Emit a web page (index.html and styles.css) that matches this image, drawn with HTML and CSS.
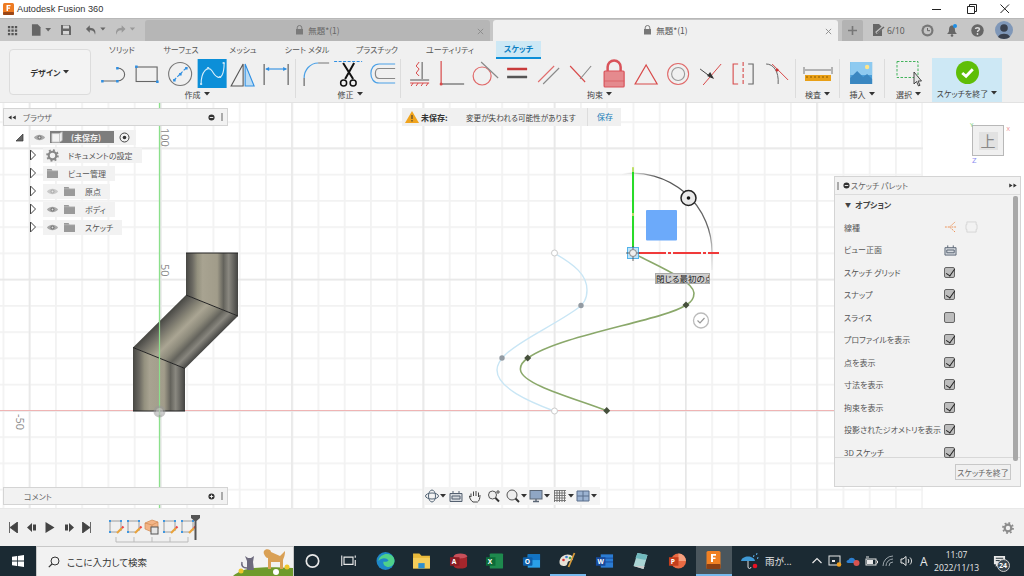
FILE: index.html
```html
<!DOCTYPE html>
<html lang="ja">
<head>
<meta charset="utf-8">
<title>Autodesk Fusion 360</title>
<link rel="stylesheet" href="styles.css">
</head>
<body>
<svg class="defs" width="0" height="0">
  <symbol id="eye" viewBox="0 0 14 10"><path d="M1 5C4 1 10 1 13 5 10 9 4 9 1 5Z" fill="#a9a9a9"/><circle cx="7" cy="5" r="2.2" fill="#777"/><circle cx="7" cy="5" r="1" fill="#ddd"/></symbol>
  <symbol id="folder" viewBox="0 0 14 12"><path d="M1 1H6L7 3H13V11H1Z" fill="#9a9a9a"/><path d="M1 3H13" stroke="#c4c4c4" stroke-width=".7"/></symbol>
  <symbol id="expand" viewBox="0 0 8 12"><path d="M1.500 1 6.500 6 1.500 11Z" fill="#fff" stroke="#444" stroke-width="1"/></symbol>
  <symbol id="sk" viewBox="0 0 18 18"><path d="M3 3H14V13" fill="none" stroke="#888" stroke-width=".8"/><path d="M3 3V14H10" fill="none" stroke="#888" stroke-width=".8"/><g fill="#3f97e0"><rect x="2" y="2" width="2" height="2"/><rect x="13" y="2" width="2" height="2"/><rect x="2" y="13" width="2" height="2"/></g><path d="M10 15 15 10" stroke="#e9a23b" stroke-width="2.200"/><path d="M15 10 16.500 8.500" stroke="#e44" stroke-width="2.200"/></symbol>
  <symbol id="caret" viewBox="0 0 6 4"><path d="M0 0H6L3 3.500Z" fill="currentColor"/></symbol>
  <symbol id="dbl" viewBox="0 0 9 6"><path d="M0 3 4 .5V5.500ZM5 3 9 .5V5.500Z" fill="#333"/></symbol>
  <symbol id="dblr" viewBox="0 0 9 6"><path d="M4 3 0 .5V5.500ZM9 3 5 .5V5.500Z" fill="#333"/></symbol>
  <linearGradient id="pipeV" x1="0" x2="1" y1="0" y2="0">
    <stop offset="0" stop-color="#474743"/><stop offset=".12" stop-color="#6a6861"/><stop offset=".22" stop-color="#94917f"/><stop offset=".32" stop-color="#a8a391"/><stop offset=".6" stop-color="#a19c8a"/><stop offset=".72" stop-color="#64635c"/><stop offset=".82" stop-color="#8a8880"/><stop offset="1" stop-color="#434341"/>
  </linearGradient>
  <linearGradient id="pipeD" gradientUnits="userSpaceOnUse" x1="186" y1="295" x2="222.500" y2="331.500">
    <stop offset="0" stop-color="#474743"/><stop offset=".14" stop-color="#6a6861"/><stop offset=".3" stop-color="#8f8c7c"/><stop offset=".42" stop-color="#aaa593"/><stop offset=".58" stop-color="#8e8b7c"/><stop offset=".72" stop-color="#64635c"/><stop offset=".84" stop-color="#88867e"/><stop offset="1" stop-color="#434341"/>
  </linearGradient>
  <linearGradient id="arcFade" gradientUnits="userSpaceOnUse" x1="622" y1="174" x2="712" y2="270">
    <stop offset="0" stop-color="#777" stop-opacity="0"/><stop offset=".2" stop-color="#555"/><stop offset=".75" stop-color="#666"/><stop offset="1" stop-color="#bbb" stop-opacity=".2"/>
  </linearGradient>
  <pattern id="gridMinor" width="26.250" height="26.250" patternUnits="userSpaceOnUse" x="2.500" y="16.250"><path d="M0 0V26.250M0 0H26.250" stroke="#f2f2f2" stroke-width="3.500" fill="none"/></pattern>
  <pattern id="gridMajor" width="131.250" height="131.250" patternUnits="userSpaceOnUse" x="28.750" y="16.250"><path d="M0 0V131.250M0 0H131.250" stroke="#e7e7e7" stroke-width="3" fill="none"/></pattern>
</svg>

<header class="titlebar">
  <svg class="app-logo" viewBox="0 0 11 12"><rect width="11" height="12" rx="1.500" fill="#ee7b22"/><rect y="9" width="11" height="3" rx="1" fill="#9a4515"/><path d="M3.500 2H7.500V3.200H5V4.500H7V5.700H5V8H3.500Z" fill="#fff"/></svg>
  <span class="app-title">Autodesk Fusion 360</span>
  <div class="win-buttons">
    <svg viewBox="0 0 34 16"><path d="M12 8.500H21" stroke="#222"/></svg>
    <svg viewBox="0 0 34 16"><path d="M13.500 5.500H20.500V12.500H13.500ZM15.500 5.500V3.500H22.500V10.500H20.500" fill="none" stroke="#222"/></svg>
    <svg viewBox="0 0 34 16"><path d="M12.500 3.500 21 12M21 3.500 12.500 12" stroke="#222"/></svg>
  </div>
</header>

<nav class="tabbar">
  <div class="qat">
    <svg class="q-grid" viewBox="0 0 12 12"><path d="M1 1h2.500v2.500H1zM4.800 1h2.500v2.500H4.800zM8.600 1h2.500v2.500H8.600zM1 4.800h2.500v2.500H1zM4.800 4.800h2.500v2.500H4.800zM8.600 4.800h2.500v2.500H8.600zM1 8.600h2.500v2.500H1zM4.800 8.600h2.500v2.500H4.800zM8.600 8.600h2.500v2.500H8.600z" fill="#555"/></svg>
    <svg class="q-doc" viewBox="0 0 22 12"><path d="M1 0H7L10 3V12H1Z" fill="#666"/><path d="M15 4H21L18 7.500Z" fill="#666"/></svg>
    <svg class="q-save" viewBox="0 0 12 12"><path d="M1 1H9.500L11 2.500V11H1Z" fill="#666"/><rect x="3" y="1.500" width="6" height="3" fill="#d5d5d5"/><rect x="3" y="7" width="6" height="3.500" fill="#d5d5d5"/></svg>
    <svg class="q-undo" viewBox="0 0 22 12"><path d="M5 1 1 5 5 9V6.200C8 6 10 7.500 10.500 11 12 6.500 9.500 3.600 5 3.600Z" fill="#666"/><path d="M16 3.500H21.500L18.700 6.500Z" fill="#666"/></svg>
    <svg class="q-redo" viewBox="0 0 22 12"><path d="M7 1 11 5 7 9V6.200C4 6 2 7.500 1.500 11 0 6.500 2.500 3.600 7 3.600Z" fill="#999"/><path d="M15.500 3.500H21L18.200 6.500Z" fill="#999"/></svg>
  </div>
  <div class="doc-tab inactive">
    <svg class="lock" viewBox="0 0 9 10"><path d="M2.200 4V2.800a2.300 2.300 0 0 1 4.600 0V4" fill="none" stroke="#7a7a7a"/><rect x="1" y="4" width="7" height="5.500" fill="#7a7a7a"/></svg>
    <span>無題*(1)</span>
    <svg class="tab-x" viewBox="0 0 8 8"><path d="M1 1 7 7M7 1 1 7" stroke="#888"/></svg>
  </div>
  <div class="doc-tab active">
    <svg class="lock" viewBox="0 0 9 10"><path d="M2.200 4V2.800a2.300 2.300 0 0 1 4.600 0V4" fill="none" stroke="#777"/><rect x="1" y="4" width="7" height="5.500" fill="#777"/></svg>
    <span>無題*(1)</span>
    <svg class="tab-x" viewBox="0 0 8 8"><path d="M1 1 7 7M7 1 1 7" stroke="#888"/></svg>
  </div>
  <div class="plus-tab"><svg viewBox="0 0 10 10"><path d="M5 0V10M0 5H10" stroke="#777" stroke-width="1.800"/></svg></div>
  <div class="account">
    <svg class="job" viewBox="0 0 13 12"><path d="M1 0H7L10 3V12H1Z" fill="#666"/><path d="M4 9 11 3" stroke="#c4c4c4" stroke-width="2.500"/><path d="M5 9 12 3" stroke="#666" stroke-width="1.500"/></svg>
    <span class="job-count">6/10</span>
    <svg class="acc-clock" viewBox="0 0 13 13"><circle cx="6.500" cy="6.500" r="6" fill="#777"/><circle cx="6.500" cy="6.500" r="3.800" fill="#c5c5c5"/><path d="M6.500 4V6.700H9" stroke="#666" fill="none"/></svg>
    <svg class="acc-bell" viewBox="0 0 12 13"><path d="M6 1.500C3.500 1.500 3 4 3 6.500 3 8.500 1.500 9.500 1 10H11C10.500 9.500 9 8.500 9 6.500 9 4 8.500 1.500 6 1.500Z" fill="#666"/><circle cx="6" cy="11.500" r="1.300" fill="#666"/><circle cx="9" cy="2" r="2" fill="#1f8fe6"/></svg>
    <svg class="acc-help" viewBox="0 0 13 13"><circle cx="6.500" cy="6.500" r="6.200" fill="#666"/><path d="M4.500 5C4.500 3.300 8.500 3.300 8.500 5 8.500 6.500 6.500 6.300 6.500 8" fill="none" stroke="#ddd" stroke-width="1.400"/><circle cx="6.500" cy="10" r=".9" fill="#ddd"/></svg>
    <svg class="acc-user" viewBox="0 0 18 18"><circle cx="9" cy="9" r="9" fill="#7f97b8"/><circle cx="9" cy="7" r="3.800" fill="#39404d"/><path d="M3 16C4 11.500 14 11.500 15 16 12 18.500 6 18.500 3 16Z" fill="#39404d"/></svg>
  </div>
</nav>

<section class="ribbon">
  <div class="ribbon-tabs">
    <span class="rt" style="width:50px">ソリッド</span>
    <span class="rt" style="width:68px">サーフェス</span>
    <span class="rt" style="width:56px">メッシュ</span>
    <span class="rt" style="width:72px">シート メタル</span>
    <span class="rt" style="width:68px">プラスチック</span>
    <span class="rt" style="width:78px">ユーティリティ</span>
    <span class="rt current">スケッチ</span>
  </div>
  <div class="ribbon-body">
    <button class="workspace">デザイン <svg class="caret"><use href="#caret"/></svg></button>
    <div class="group g-create">
      <div class="icons">
        <svg viewBox="0 0 32 30"><path d="M3 22H18C28 22 28 9 18 9" fill="none" stroke="#666" stroke-width="1.100"/><g fill="#2f8fe2"><rect x="2" y="21" width="2.500" height="2.500"/><rect x="17" y="21" width="2.500" height="2.500"/><rect x="17" y="8" width="2.500" height="2.500"/></g></svg>
        <svg viewBox="0 0 32 30"><rect x="5" y="8" width="21" height="14.500" fill="none" stroke="#666" stroke-width="1.100"/><g fill="#2f8fe2"><rect x="4" y="6.500" width="2.500" height="2.500"/><rect x="25" y="21.500" width="2.500" height="2.500"/></g></svg>
        <svg viewBox="0 0 32 30"><circle cx="16" cy="15" r="11.500" fill="none" stroke="#777" stroke-width="1.100"/><path d="M10 21 22 9" stroke="#2f8fe2" stroke-dasharray="3 1.500" stroke-width="1.100"/><g fill="#2f8fe2"><rect x="9" y="20" width="2.500" height="2.500"/><rect x="21" y="8" width="2.500" height="2.500"/><rect x="15" y="14" width="2.500" height="2.500"/></g></svg>
        <svg class="on" viewBox="0 0 32 30"><rect x="1.500" y="0" width="29" height="29" fill="#0c8fd8"/><path d="M5 25C5 12 12 6 16 12 20 19 24 20 26 16 27 14 28 9 28 4" fill="none" stroke="#d8eefa" stroke-width="1.100"/><g fill="#bfe3f7"><rect x="4" y="24" width="2" height="2"/><rect x="11" y="8" width="2" height="2"/><rect x="23" y="17" width="2" height="2"/><rect x="26.500" y="3" width="2" height="2"/></g></svg>
        <svg viewBox="0 0 32 30"><path d="M15 5 3 27H15Z" fill="none" stroke="#555" stroke-width="1.100"/><path d="M17 5V27H26Z" fill="#bcdcf4" stroke="#2f8fe2" stroke-width="1.100"/></svg>
        <svg viewBox="0 0 32 30"><path d="M4 5V26M28 5V26" stroke="#555" stroke-width="1.100"/><path d="M6 10H26" stroke="#2f8fe2" stroke-width="1.100"/><path d="M5 10 9 8V12ZM27 10 23 8V12Z" fill="#2f8fe2"/></svg>
      </div>
      <div class="g-label">作成 <svg class="caret"><use href="#caret"/></svg></div>
    </div>
    <div class="group g-modify">
      <div class="icons">
        <svg viewBox="0 0 32 30"><path d="M4 27V19" stroke="#666" stroke-width="1.200"/><path d="M4 19C4 11 10 4 18 4" fill="none" stroke="#4aa0e6" stroke-width="1.200"/><path d="M18 4H29" stroke="#888" stroke-width="1.200"/></svg>
        <svg viewBox="0 0 32 30"><path d="M2 2.500H30" stroke="#2f8fe2" stroke-dasharray="3 1.500"/><path d="M11 4 21 20M22 4 13 20" stroke="#111" stroke-width="2"/><circle cx="11.500" cy="24" r="3" fill="none" stroke="#111" stroke-width="1.500"/><circle cx="21" cy="24" r="3" fill="none" stroke="#111" stroke-width="1.500"/></svg>
        <svg viewBox="0 0 32 30"><path d="M30 5H14C3 5 3 24 14 24H30" fill="none" stroke="#4aa0e6" stroke-width="1.200"/><path d="M30 9.500H14C9 9.500 9 19.500 14 19.500H30" fill="none" stroke="#888" stroke-width="1.200"/></svg>
      </div>
      <div class="g-label">修正 <svg class="caret"><use href="#caret"/></svg></div>
    </div>
    <div class="group g-constraint">
      <div class="icons">
        <svg viewBox="0 0 32 30"><path d="M15 3 12 7 15 10 12 14 15 17" fill="none" stroke="#d84a4a"/><path d="M18 3V20" stroke="#555"/><path d="M6 21H25" stroke="#555"/><path d="M6 24H25M9 24 7 27M14 24 12 27M19 24 17 27M24 24 22 27" stroke="#d84a4a"/></svg>
        <svg viewBox="0 0 32 30"><path d="M5 2V25" stroke="#d84a4a" stroke-width="1.200"/><path d="M5 25H28" stroke="#666" stroke-width="1.200"/><circle cx="5" cy="25" r="1.500" fill="#d84a4a"/></svg>
        <svg viewBox="0 0 32 30"><circle cx="13" cy="17" r="9" fill="none" stroke="#e06a6a" stroke-width="1.200"/><path d="M12 3 29 19" stroke="#888" stroke-width="1.100"/></svg>
        <svg viewBox="0 0 32 30"><path d="M6 10H26" stroke="#c83a3a" stroke-width="2.500"/><path d="M6 18H26" stroke="#555" stroke-width="2.500"/></svg>
        <svg viewBox="0 0 32 30"><path d="M5 23 21 7" stroke="#e06a6a" stroke-width="1.100"/><path d="M10 25 26 9" stroke="#888" stroke-width="1.100"/></svg>
        <svg viewBox="0 0 32 30"><path d="M5 7 20 23" stroke="#d84a4a" stroke-width="1.100"/><path d="M15 20 26 7" stroke="#888" stroke-width="1.100"/></svg>
        <svg viewBox="0 0 32 30"><path d="M9.500 12V8a6.500 6.500 0 0 1 13 0V12" fill="none" stroke="#d9535a" stroke-width="2.500"/><rect x="6" y="12" width="20" height="16" rx="1" fill="#e58a8e" stroke="#d9535a" stroke-width="1.200"/><path d="M6 22H26" stroke="#d9535a" stroke-width=".7"/></svg>
        <svg viewBox="0 0 32 30"><path d="M16 6 27 25H5Z" fill="none" stroke="#d84a4a" stroke-width="1.200"/></svg>
        <svg viewBox="0 0 32 30"><circle cx="16" cy="15" r="10.500" fill="none" stroke="#e06a6a" stroke-width="1.100"/><circle cx="16" cy="15" r="6.500" fill="none" stroke="#999" stroke-width="1.100"/></svg>
        <svg viewBox="0 0 32 30"><path d="M9 26 27 5" stroke="#d84a4a" stroke-width="1"/><path d="M6 10 18 19" stroke="#444" stroke-width="1"/><path d="M20 20 13 17 16 13Z" fill="#333"/></svg>
        <svg viewBox="0 0 32 30"><path d="M11 5H6V25H11" fill="none" stroke="#d84a4a" stroke-width="1.100"/><path d="M21 5H26V25H21" fill="none" stroke="#666" stroke-width="1.100"/><path d="M16 3V27" stroke="#d84a4a" stroke-dasharray="4 2" stroke-width="1.100"/></svg>
        <svg viewBox="0 0 32 30"><path d="M7 5C14 5 20 12 19 25" fill="none" stroke="#666" stroke-width="1"/><path d="M13 5 29 21" stroke="#d84a4a" stroke-width="1"/><circle cx="18" cy="11" r="1.500" fill="#c33"/></svg>
      </div>
      <div class="g-label">拘束 <svg class="caret"><use href="#caret"/></svg></div>
    </div>
    <div class="group g-inspect">
      <div class="icons">
        <svg class="wide" viewBox="0 0 36 30"><path d="M4 8V15M32 8V15M5 11H31" stroke="#666" stroke-width=".9"/><rect x="5" y="16" width="26" height="6" fill="#e9a017"/><path d="M7 17V19M11 17V19M15 17V19M19 17V19M23 17V19M27 17V19" stroke="#8a5a00"/></svg>
      </div>
      <div class="g-label">検査 <svg class="caret"><use href="#caret"/></svg></div>
    </div>
    <div class="group g-insert">
      <div class="icons">
        <svg viewBox="0 0 32 30"><rect x="4" y="3" width="22" height="22" fill="#4b9fd9"/><rect x="4" y="3" width="22" height="13" fill="#8ecaf0"/><path d="M4 19 11 12 17 18 21 15 26 20V25H4Z" fill="#3a87c1"/><circle cx="21" cy="8" r="2.200" fill="#ffe68a"/></svg>
      </div>
      <div class="g-label">挿入 <svg class="caret"><use href="#caret"/></svg></div>
    </div>
    <div class="group g-select">
      <div class="icons">
        <svg class="wide" viewBox="0 0 36 30"><rect x="6" y="2.500" width="21" height="16" fill="none" stroke="#43b35c" stroke-dasharray="2.500 1.500"/><path d="M23 13V25L25.500 22.500 27.500 27 29 26.300 27 22H30.500Z" fill="#e5e5e5" stroke="#333" stroke-width=".9"/></svg>
      </div>
      <div class="g-label">選択 <svg class="caret"><use href="#caret"/></svg></div>
    </div>
    <div class="group g-finish">
      <svg class="finish-icon" viewBox="0 0 24 24"><circle cx="12" cy="12" r="12" fill="#5fbe08"/><path d="M6.500 12.500 10.500 16 17.500 8.500" fill="none" stroke="#fff" stroke-width="3"/></svg>
      <div class="g-label">スケッチを終了 <svg class="caret"><use href="#caret"/></svg></div>
    </div>
  </div>
</section>

<main class="viewport">
  <svg class="scene" viewBox="0 103 1024 405" preserveAspectRatio="none">
    <rect x="0" y="103" width="923" height="405" fill="url(#gridMinor)"/>
    <rect x="0" y="103" width="923" height="405" fill="url(#gridMajor)"/>
    <path d="M0 410.500H834" stroke="#efb4b4" stroke-width="1.100"/>
    <path d="M159.500 103V508" stroke="#8be08b" stroke-width="1.300"/>
    <text class="axis-num" transform="translate(161 128) rotate(90)">100</text>
    <text class="axis-num" transform="translate(161 264) rotate(90)">50</text>
    <text class="axis-num" transform="translate(16 414) rotate(90)">-50</text>

    <polygon points="186,253 238,253 238,316 186,295" fill="url(#pipeV)"/>
    <polygon points="186,295 238,316 185,368.500 133,347.500" fill="url(#pipeD)"/>
    <polygon points="133,347.500 185,368.500 185,411 133,411" fill="url(#pipeV)"/>
    <path d="M186 253H238M186 295 238 316M133 347.500 185 368.500M133 411H185" stroke="#222" fill="none" stroke-width="1"/>
    <path d="M159.500 320V420" stroke="#8be08b" stroke-width="1.200"/>
    <circle cx="159.500" cy="411.500" r="6" fill="#999" fill-opacity=".55"/><circle cx="159.500" cy="411.500" r="3.500" fill="#ddd" fill-opacity=".4"/>

    <path d="M554 253C575 265 587 275 587 290 587 300 583 304 578 308 555 325 520 340 505 355 498 362 497 366 497 370 497 388 530 402 554 411" fill="none" stroke="#c9e6f5" stroke-width="1.400"/>
    <circle cx="554.500" cy="253" r="3" fill="#fff" stroke="#ccc"/>
    <circle cx="581" cy="305.500" r="2.700" fill="#939ba3"/>
    <circle cx="502" cy="358" r="2.700" fill="#939ba3"/>
    <circle cx="554.500" cy="411" r="3" fill="#fff" stroke="#ccc"/>

    <path d="M633 253C655 265 693 280 694 293 694 300 690 303 686 305 665 320 560 335 528 358 522 362 520 366 520.500 370 522 385 580 400 607 411" fill="none" stroke="#8aa86a" stroke-width="1.600"/>
    <g fill="#46503c"><path d="M686 301.500 689.500 305 686 308.500 682.500 305Z"/><path d="M527.700 354.500 531.200 358 527.700 361.500 524.200 358Z"/><path d="M606.700 407 610.200 410.700 606.700 414.300 603.200 410.700Z"/></g>

    <path d="M622 174A79 79 0 0 1 712 253V270" fill="none" stroke="url(#arcFade)" stroke-width="1.300"/>
    <path d="M633 168V253" stroke="#12d812" stroke-width="1.800"/>
    <path d="M633 167V172M633 213V216" stroke="#c8e070" stroke-width="1.800"/>
    <path d="M638 253H719" stroke="#f03a3a" stroke-width="1.800" stroke-dasharray="28 2 3 2"/>
    <rect x="646" y="210" width="31" height="30.500" rx="1" fill="#6caafa"/>
    <rect x="627.500" y="247.500" width="11" height="11" fill="#bfe4fa" stroke="#52b3ea"/>
    <path d="M626 253H640M633 246V261" stroke="#444" stroke-width=".8"/>
    <circle cx="633" cy="253" r="3.500" fill="#eee" stroke="#888"/>
    <circle cx="688.500" cy="198" r="7.500" fill="#e9e9e9" stroke="#222" stroke-width="1.500"/><circle cx="688.500" cy="198" r="1.800" fill="#111"/>
    <circle cx="701" cy="320.500" r="7.500" fill="#fff" stroke="#bbb" stroke-width="1.300"/><path d="M697.500 320.500 700 323 704.500 318" fill="none" stroke="#999" stroke-width="1.200"/>
  </svg>

  <div class="tooltip">閉じる最初の点</div>

  <div class="panel browser">
    <div class="panel-head">
      <svg class="dbl"><use href="#dbl"/></svg><span class="ph-title">ブラウザ</span>
      <svg class="minus" viewBox="0 0 8 8"><circle cx="4" cy="4" r="3.500" fill="#333"/><path d="M2 4H6" stroke="#fff"/></svg>
      <span class="grip"></span>
    </div>
  </div>
  <div class="tree">
    <div class="node root">
      <svg class="root-tri" viewBox="0 0 9 9"><path d="M8 1V8H1Z" fill="#666" stroke="#333" stroke-width=".7"/></svg>
      <div class="pill">
        <svg class="ico"><use href="#eye"/></svg>
        <span class="root-name"><svg class="cube" viewBox="0 0 14 14"><path d="M1 3H10L13 1V11L10 13H1Z" fill="#f2f2f2" stroke="#bbb"/><path d="M10 3V13" stroke="#bbb"/></svg><b>(未保存)</b></span>
        <svg class="radio" viewBox="0 0 11 11"><circle cx="5.500" cy="5.500" r="4.500" fill="none" stroke="#444"/><circle cx="5.500" cy="5.500" r="1.800" fill="#333"/></svg>
      </div>
    </div>
    <div class="node"><svg class="exp"><use href="#expand"/></svg><div class="pill">
      <svg class="ico gear" viewBox="0 0 12 12"><circle cx="6" cy="6" r="3.500" fill="none" stroke="#888" stroke-width="2"/><circle cx="6" cy="6" r="5" fill="none" stroke="#888" stroke-width="1.600" stroke-dasharray="1.800 2.100"/></svg>
      <span class="label l1">ドキュメントの設定</span></div></div>
    <div class="node"><svg class="exp"><use href="#expand"/></svg><div class="pill">
      <svg class="ico"><use href="#folder"/></svg><span class="label l1">ビュー管理</span></div></div>
    <div class="node"><svg class="exp"><use href="#expand"/></svg><div class="pill">
      <svg class="ico faded"><use href="#eye"/></svg><svg class="ico"><use href="#folder"/></svg><span class="label">原点</span></div></div>
    <div class="node"><svg class="exp"><use href="#expand"/></svg><div class="pill">
      <svg class="ico"><use href="#eye"/></svg><svg class="ico"><use href="#folder"/></svg><span class="label">ボディ</span></div></div>
    <div class="node"><svg class="exp"><use href="#expand"/></svg><div class="pill">
      <svg class="ico"><use href="#eye"/></svg><svg class="ico"><use href="#folder"/></svg><span class="label">スケッチ</span></div></div>
  </div>

  <div class="notice">
    <svg class="warn" viewBox="0 0 14 12"><path d="M7 0 14 12H0Z" fill="#f0a41e"/><path d="M7 4V8M7 9V10.500" stroke="#333"/></svg>
    <b>未保存:</b>
    <span class="notice-text">変更が失われる可能性があります</span>
    <span class="notice-save">保存</span>
  </div>

  <div class="viewcube">
    <span class="vc-y">Y</span><span class="vc-x">X</span><span class="vc-z">Z</span>
    <div class="vc-face"><span>上</span></div>
  </div>

  <div class="palette">
    <div class="pal-head">
      <span class="grip"></span>
      <svg class="minus" viewBox="0 0 8 8"><circle cx="4" cy="4" r="3.500" fill="#333"/><path d="M2 4H6" stroke="#fff"/></svg>
      <span class="ph-title">スケッチ パレット</span>
      <svg class="fwd"><use href="#dblr"/></svg>
    </div>
    <div class="pal-body">
      <div class="pal-scroll"></div>
      <div class="pal-section"><span class="tri">▼</span> オプション</div>
      <div class="pal-row"><span>線種</span>
        <svg class="pal-ic" viewBox="0 0 14 13"><path d="M1 6.500H6L12 1M6 6.500 12 12M8 6.500H13" stroke="#ea8c4e" stroke-dasharray="2 1" fill="none"/></svg>
        <svg class="pal-ic second" viewBox="0 0 14 13"><path d="M2 1H12V4H13V9H12V12H2V9H1V4H2Z" fill="none" stroke="#d5d5d5"/></svg>
      </div>
      <div class="pal-row"><span>ビュー正面</span>
        <svg class="pal-ic" viewBox="0 0 14 13"><path d="M1 4H13V12H1ZM4 4V1.500M10 4V1.500M3 6.500H11V9.500H3Z" fill="#d5d9de" stroke="#546070"/></svg>
      </div>
      <div class="pal-row"><span>スケッチ グリッド</span><i class="check on"></i></div>
      <div class="pal-row"><span>スナップ</span><i class="check on"></i></div>
      <div class="pal-row"><span>スライス</span><i class="check"></i></div>
      <div class="pal-row"><span>プロファイルを表示</span><i class="check on"></i></div>
      <div class="pal-row"><span>点を表示</span><i class="check on"></i></div>
      <div class="pal-row"><span>寸法を表示</span><i class="check on"></i></div>
      <div class="pal-row"><span>拘束を表示</span><i class="check on"></i></div>
      <div class="pal-row"><span>投影されたジオメトリを表示</span><i class="check on"></i></div>
      <div class="pal-row"><span>3D スケッチ</span><i class="check on"></i></div>
    </div>
    <div class="pal-foot"><button class="pal-finish">スケッチを終了</button></div>
  </div>

  <div class="panel comments">
    <div class="panel-head">
      <span class="ph-title c">コメント</span>
      <svg class="minus" viewBox="0 0 8 8"><circle cx="4" cy="4" r="3.500" fill="#333"/><path d="M2 4H6M4 2V6" stroke="#fff"/></svg>
      <span class="grip"></span>
    </div>
  </div>

  <div class="navbar">
    <svg class="nv" viewBox="0 0 14 14"><ellipse cx="7" cy="7" rx="3.500" ry="6" fill="none" stroke="#567" /><ellipse cx="7" cy="7" rx="6.500" ry="3" fill="none" stroke="#567"/></svg><svg class="nc"><use href="#caret"/></svg>
    <svg class="nv" viewBox="0 0 14 13"><path d="M1 4H13V12H1ZM4 4V1.500M10 4V1.500M3 6.500H11V9.500H3Z" fill="#d5d9de" stroke="#546070"/></svg>
    <svg class="nv" viewBox="0 0 14 14"><path d="M3 8V4.500M5.500 7V2.500M8 7V2M10.500 8V3.500M3 8 1.500 7C1 8 3 12 5 13H9.500C11 12 12 10 12 6" fill="none" stroke="#444" stroke-width="1"/></svg>
    <svg class="nv" viewBox="0 0 14 14"><circle cx="5.500" cy="6" r="4" fill="#eee" stroke="#555"/><path d="M8.500 9 12 12.500" stroke="#333" stroke-width="2"/><path d="M11 1V5M9 3H13" stroke="#555"/></svg>
    <svg class="nv" viewBox="0 0 14 14"><circle cx="6" cy="6" r="5" fill="#eee" stroke="#555"/><path d="M9.500 9.500 13 13" stroke="#333" stroke-width="2"/></svg><svg class="nc"><use href="#caret"/></svg>
    <svg class="nv" viewBox="0 0 14 14"><rect x="1" y="1.500" width="12" height="8.500" fill="#8fa6c4" stroke="#5b6675"/><path d="M4 12.500H10M7 10V12.500" stroke="#5b6675" stroke-width="1.400"/></svg><svg class="nc"><use href="#caret"/></svg>
    <svg class="nv" viewBox="0 0 14 14"><path d="M1.500 1V13M4 1V13M6.500 1V13M9 1V13M11.500 1V13M1 1.500H13M1 4H13M1 6.500H13M1 9H13M1 11.500H13" stroke="#707070" stroke-width=".9"/></svg><svg class="nc"><use href="#caret"/></svg>
    <svg class="nv" viewBox="0 0 14 14"><path d="M1 2H13V12H1Z" fill="#9cb3d2" stroke="#5b6f8c"/><path d="M7 2V12M1 7H13" stroke="#5b6f8c"/></svg><svg class="nc"><use href="#caret"/></svg>
  </div>
</main>

<footer class="timeline">
  <div class="tl-controls">
    <svg viewBox="0 0 10 11"><path d="M1.500 0V11M9.500 0V11L2 5.500Z" fill="#444" stroke="#444" stroke-width=".8"/></svg>
    <svg viewBox="0 0 10 11"><path d="M0 5.500 5 1V10ZM6 2.500H9V8.500H6Z" fill="#444"/></svg>
    <svg viewBox="0 0 10 11"><path d="M.5 0 9.500 5.500 .5 11Z" fill="#444"/></svg>
    <svg viewBox="0 0 10 11"><path d="M10 5.500 5 1V10ZM1 2.500H4V8.500H1Z" fill="#444"/></svg>
    <svg viewBox="0 0 10 11"><path d="M8.500 0V11M.5 0V11L8 5.500Z" fill="#444" stroke="#444" stroke-width=".8"/></svg>
  </div>
  <div class="tl-track">
    <svg class="tl-item"><use href="#sk"/></svg>
    <svg class="tl-item"><use href="#sk"/></svg>
    <svg class="tl-item" viewBox="0 0 18 18"><path d="M2 5 9 2 15 4V11L9 14 2 11Z" fill="#f2b487" stroke="#d08a50" stroke-width=".7"/><path d="M2 5 9 7 15 4M9 7V14" stroke="#d08a50" stroke-width=".7" fill="none"/><rect x="8" y="9" width="7" height="7" fill="#e5e5e5" stroke="#555"/></svg>
    <svg class="tl-item"><use href="#sk"/></svg>
    <svg class="tl-item"><use href="#sk"/></svg>
    <svg class="tl-bracket" viewBox="0 0 74 6"><path d="M1 0V5H73V0M19 0V5M37 0V5M55 0V5" fill="none" stroke="#bbb"/></svg>
    <svg class="tl-marker" viewBox="0 0 10 25"><path d="M0 0H9V3L5.500 6V25H3.500V6L0 3Z" fill="#555"/></svg>
  </div>
  <svg class="tl-gear" viewBox="0 0 12 12"><circle cx="6" cy="6" r="3.300" fill="none" stroke="#8c8c8c" stroke-width="2.200"/><circle cx="6" cy="6" r="5" fill="none" stroke="#8c8c8c" stroke-width="1.800" stroke-dasharray="1.800 2.100"/></svg>
</footer>

<footer class="taskbar">
  <div class="start"><svg viewBox="0 0 12 12"><path d="M0 1.700 5 1V5.600H0ZM5.800.9 12 0V5.600H5.800ZM0 6.400H5V11L0 10.300ZM5.800 6.400H12V12L5.800 11.100Z" fill="#fff"/></svg></div>
  <div class="search">
    <svg class="s-ic" viewBox="0 0 12 12"><circle cx="7" cy="5" r="4" fill="none" stroke="#333"/><path d="M4 8 .8 11.200" stroke="#333" stroke-width="1.200"/></svg>
    <span>ここに入力して検索</span>
    <svg class="s-art" viewBox="0 0 60 30"><path d="M0 30C10 21 30 20 60 22V30Z" fill="#6f9a2c"/><path d="M14 24V15L12 10 15 12H18L21 10 20 16 21 24Z" fill="#6d6a7d"/><path d="M14 22C10 22 8 20 9 16" fill="none" stroke="#6d6a7d" stroke-width="1.500"/><path d="M31 8C29 2 38 2 38 6L47 10 52 5C52 10 51 11 50 14V23H47V16H38V23H35V12C33 12 32 10 31 8Z" fill="#d9a055"/><circle cx="8" cy="25" r="2.500" fill="#eec72b"/><circle cx="43" cy="26" r="3" fill="#fff"/><circle cx="54" cy="21" r="2.500" fill="#eec72b"/></svg>
  </div>
  <div class="tb-apps">
    <div class="tb-app"><svg viewBox="0 0 16 16"><circle cx="8" cy="8" r="5.500" fill="none" stroke="#e8e8e8" stroke-width="1.500"/></svg></div>
    <div class="tb-app"><svg viewBox="0 0 16 16"><path d="M4 4.500H12V11H4ZM2 3V12.500M14 3V5M14 7V12.500" fill="none" stroke="#e8e8e8"/></svg></div>
    <div class="tb-app"><svg viewBox="0 0 18 18"><circle cx="9" cy="9" r="9" fill="#1e88c8"/><path d="M18 9C18 3 12 1 7.500 2.500 3.500 4 2 7 2 9 5 5.500 10 5.500 12 8.500 11 10 8 10 7 9.500 6 12.500 9 15 12 15 15 15 18 12 18 9Z" fill="#4fd08a"/></svg></div>
    <div class="tb-app"><svg viewBox="0 0 18 16"><path d="M1 1H7L9 3H17V15H1Z" fill="#e9b93a"/><rect x="1" y="5" width="16" height="10" fill="#f4cd5a"/><rect x="6" y="10" width="6" height="5" fill="#2d8fd0"/></svg></div>
    <div class="tb-app"><svg viewBox="0 0 20 18"><ellipse cx="12" cy="4" rx="7" ry="3" fill="#c8505a"/><path d="M5 4V14C5 18 19 18 19 14V4C19 7 5 7 5 4Z" fill="#a4262c"/><rect x="1" y="5" width="10" height="9" fill="#8a1c24"/><text class="tb-letter" x="3" y="12.500">A</text></svg></div>
    <div class="tb-app"><svg viewBox="0 0 20 18"><rect x="5" y="1" width="14" height="16" rx="1" fill="#1e8a4e"/><rect x="1" y="5" width="10" height="9" fill="#0d6b38"/><text class="tb-letter" x="3" y="12.500">X</text></svg></div>
    <div class="tb-app"><svg viewBox="0 0 20 18"><rect x="6" y="2" width="13" height="14" fill="#2aa0e8"/><path d="M6 2H19V8H6Z" fill="#1273c4"/><rect x="1" y="5" width="10" height="9" rx="1" fill="#0f5fa8"/><text class="tb-letter" x="3" y="12.500">O</text></svg></div>
    <div class="tb-app underlined"><svg viewBox="0 0 18 18"><path d="M1 11C1 5 8 2 12 4 16 6 15 10 11 10 8 10 10 15 6 15 3 15 1 14 1 11Z" fill="#e7e2d8"/><circle cx="5" cy="9" r="1.300" fill="#d33"/><circle cx="8" cy="6" r="1.300" fill="#3a7fd0"/><circle cx="11.500" cy="7" r="1.300" fill="#4aa84a"/><path d="M10 16 16 2" stroke="#d59a3a" stroke-width="1.800"/></svg></div>
    <div class="tb-app"><svg viewBox="0 0 20 18"><rect x="6" y="2" width="13" height="14" fill="#2b7cd3"/><path d="M6 6H19M6 10H19" stroke="#174a9c"/><rect x="1" y="5" width="10" height="9" fill="#174a9c"/><text class="tb-letter" x="2.500" y="12.500">W</text></svg></div>
    <div class="tb-app"><svg viewBox="0 0 18 18"><path d="M6 1 16 3 12 17 2 14Z" fill="#a9d4d4"/><path d="M6 1 16 3 14 8 4 6Z" fill="#70b9bd"/><path d="M2 14 12 17 13 14Z" fill="#ccc"/></svg></div>
    <div class="tb-app"><svg viewBox="0 0 20 18"><circle cx="11" cy="9" r="8" fill="#e86a43"/><path d="M11 9V1A8 8 0 0 1 19 9Z" fill="#f4a07f"/><rect x="1" y="5" width="10" height="9" fill="#c43e1c"/><text class="tb-letter" x="3" y="12.500">P</text></svg></div>
    <div class="tb-app active"><svg viewBox="0 0 16 18"><rect x="1" y="0" width="14" height="18" rx="1.500" fill="#f08023"/><rect x="1" y="13" width="14" height="5" rx="1" fill="#8a3f14"/><path d="M5.500 3H10.500V4.700H7.500V6.500H10V8H7.500V11H5.500Z" fill="#fff"/></svg></div>
  </div>
  <div class="weather">
    <svg viewBox="0 0 20 18"><path d="M1 9C2 3 14 3 15 9Z" fill="#3f9ad6"/><path d="M8 9V15C8 17 11 17 11 15" fill="none" stroke="#ddd"/><path d="M14 3 13.500 5M17 1 16.500 3M18 5 17.500 7" stroke="#5bb0e8"/><circle cx="15" cy="14" r="2.300" fill="#e81123"/></svg>
    <span>雨が...</span>
  </div>
  <div class="tray">
    <svg viewBox="0 0 12 12"><path d="M1.500 8 6 3.500 10.500 8" fill="none" stroke="#e8e8e8" stroke-width="1.200"/></svg>
    <svg viewBox="0 0 14 12"><rect x="1" y="1" width="11" height="9" fill="none" stroke="#e8e8e8"/><path d="M4 5H7V7H4Z" fill="#e8e8e8"/><circle cx="11" cy="9.500" r="2.300" fill="#f0a020"/></svg>
    <svg viewBox="0 0 14 12"><path d="M2 8C0 8 0 5 2.500 5 3.500 2 8 2 9 5 11 5 11 8 9 8Z" fill="#2d7fd0"/><circle cx="10.500" cy="8" r="3" fill="#d9534f"/></svg>
    <svg viewBox="0 0 14 12"><rect x="2" y="4" width="10" height="6" fill="none" stroke="#e8e8e8"/><rect x="3" y="5" width="6" height="4" fill="#e8e8e8"/><path d="M12 6H13.500V8H12M2 2H5" stroke="#e8e8e8"/></svg>
    <svg viewBox="0 0 14 12"><path d="M1 11A10 10 0 0 1 11 1M4 11A7 7 0 0 1 11 4M7 11A4 4 0 0 1 11 7" fill="none" stroke="#9aa4aa"/></svg>
    <svg viewBox="0 0 14 12"><path d="M1 4H3L6 1.500V10.500L3 8H1Z" fill="none" stroke="#e8e8e8"/><path d="M8 4C9 5 9 7 8 8M10 2.500C12 4.500 12 7.500 10 9.500" fill="none" stroke="#e8e8e8"/></svg>
    <span class="ime">A</span>
  </div>
  <div class="clock"><span>11:07</span><span>2022/11/13</span></div>
  <div class="notify">
    <svg viewBox="0 0 14 14"><path d="M1 1H13V10H6L3 13V10H1Z" fill="#e8e8e8"/><path d="M3 3.500H11M3 6H11" stroke="#1b2a33"/></svg>
    <span class="badge">24</span>
  </div>
</footer>
</body>
</html>
```

FILE: styles.css
```css
* { box-sizing: border-box; }
html, body { margin: 0; height: 100%; overflow: hidden; }
body {
  width: 1024px;
  height: 576px;
  display: flex;
  flex-direction: column;
  font-family: "Noto Sans CJK JP", "Noto Sans", sans-serif;
  font-feature-settings: "palt";
  font-size: 8px;
  color: #444;
  background: #fff;
}
svg { display: block; flex: none; }
.defs { position: absolute; }
.caret { width: 6px; height: 4px; display: inline-block; color: #333; }

/* Title bar */
.titlebar { height: 18px; display: flex; align-items: center; padding-left: 3px; background: #fff; flex: none; }
.app-logo { width: 11px; height: 12px; }
.app-title { margin-left: 3px; font: 9.200px "Liberation Sans", sans-serif; color: #333; }
.win-buttons { margin-left: auto; display: flex; margin-right: 2px; }
.win-buttons svg { width: 34px; height: 16px; }

/* Tab bar */
.tabbar { height: 23px; flex: none; display: flex; background: #c6c6c6; border-top: 1px solid #b8b8b8; }
.qat { width: 145px; display: flex; align-items: center; flex: none; padding-left: 7px; }
.q-grid { width: 11px; height: 11px; }
.q-doc { width: 21px; height: 12px; margin-left: 13px; }
.q-save { width: 12px; height: 12px; margin-left: 8px; }
.q-undo { width: 21px; height: 12px; margin-left: 13px; }
.q-redo { width: 21px; height: 12px; margin-left: 9px; }
.doc-tab { width: 345px; margin-top: 1px; display: flex; align-items: center; justify-content: center; position: relative; font-size: 8.500px; color: #666; border-radius: 3px 3px 0 0; flex: none; padding-bottom: 1px; }
.doc-tab.inactive { background: #b6b6b6; }
.doc-tab.active { background: #f0f0f0; margin-left: 3px; color: #555; }
.lock { width: 9px; height: 10px; margin-right: 4px; }
.tab-x { position: absolute; right: 6px; top: 8px; width: 7px; height: 7px; }
.plus-tab { width: 21px; margin-left: 4px; margin-top: 1px; background: #b3b3b3; border-radius: 2px 2px 0 0; display: flex; align-items: center; justify-content: center; }
.plus-tab svg { width: 9px; height: 9px; }
.account { display: flex; align-items: center; flex: 1; padding-left: 9px; }
.job { width: 13px; height: 12px; }
.job-count { font: 8.500px "Open Sans", sans-serif; color: #555; margin-left: 2px; }
.acc-clock { width: 13px; height: 13px; margin-left: 16px; }
.acc-bell { width: 12px; height: 13px; margin-left: 12px; }
.acc-help { width: 13px; height: 13px; margin-left: 13px; }
.acc-user { width: 18px; height: 18px; margin-left: 11px; }

/* Ribbon */
.ribbon { height: 62px; flex: none; background: #f0f0f0; border-bottom: 1px solid #e2e2e2; position: relative; }
.ribbon-tabs { height: 18px; display: flex; padding-left: 97px; align-items: center; }
.rt { text-align: center; font-size: 8px; color: #555; flex: none; line-height: 16px; }
.rt.current { width: 45px; height: 18px; margin-left: 7px; background: #cde8f5; border-bottom: 2px solid #0c8fd8; color: #0c7ec2; font-weight: 700; }
.ribbon-body { display: flex; height: 43px; }
.workspace { position: absolute; left: 9px; top: 8px; width: 82px; height: 46px; border: 1px solid #dcdcdc; border-radius: 4px; background: #f3f3f3; font: 700 8px "Noto Sans CJK JP", sans-serif; font-feature-settings: "palt"; color: #333; display: flex; align-items: center; justify-content: center; gap: 3px; padding: 0; }
.group { flex: none; position: relative; display: flex; flex-direction: column; align-items: center; border-right: 1px solid #dcdcdc; height: 39px; margin-top: 0; }
.icons { display: flex; height: 30px; }
.icons svg { width: 32.250px; height: 30px; }
.icons svg.wide { width: 36px; }
.g-label { font-size: 8px; color: #444; display: flex; align-items: center; gap: 3px; height: 10px; white-space: nowrap; }
.g-create { margin-left: 99px; width: 197px; align-items: flex-start; }
.g-create .g-label { align-self: center; }
.g-modify { width: 105px; padding-left: 4px; align-items: flex-start; }
.g-modify .g-label { align-self: center; }
.g-constraint { width: 395px; padding-left: 3px; align-items: flex-start; }
.g-constraint .g-label { align-self: center; }
.g-inspect { width: 44px; }
.g-insert { width: 45px; }
.g-select { width: 47px; border-right: none; }
.g-finish { width: 70px; height: 44px; margin-top: -1px; background: #cde8f5; border: none; padding-top: 3px; }
.finish-icon { width: 23px; height: 23px; margin-bottom: 4px; }

/* Viewport */
.viewport { position: relative; flex: 1; min-height: 0; background: #fff; overflow: hidden; }
.scene { position: absolute; left: 0; top: 0; width: 1024px; height: 100%; }
.axis-num { font: 11px "Open Sans", sans-serif; fill: #8a8a8a; }

.tooltip { position: absolute; left: 655px; top: 170px; width: 55px; height: 11px; background: #cfcfcf; border: 1px solid #a9a9a9; font-size: 8.500px; line-height: 9px; color: #222; overflow: hidden; white-space: nowrap; }

.panel { position: absolute; left: 3px; width: 225px; height: 18px; background: #f2f2f2; border: 1px solid #d4d4d4; }
.panel.browser { top: 5px; }
.panel.comments { top: 384px; }
.panel-head { height: 100%; display: flex; align-items: center; padding: 0 3px; }
.dbl { width: 8px; height: 5px; margin-right: 7px; margin-left: 1px; }
.ph-title { font-size: 8px; color: #666; }
.ph-title.c { margin-left: 17px; }
.minus { width: 7px; height: 7px; margin-left: auto; }
.grip { width: 2px; height: 8px; background: #aaa; margin-left: 6px; margin-right: 1px; }

.tree { position: absolute; left: 15px; top: 25px; display: flex; flex-direction: column; gap: 0; }
.node { height: 18px; display: flex; align-items: center; padding-left: 14px; }
.node.root { padding-left: 0; }
.root-tri { width: 9px; height: 9px; margin-right: 6px; }
.exp { width: 8px; height: 12px; margin-right: 6px; }
.pill { display: flex; align-items: center; background: #f2f2f2; height: 15px; padding: 0 6px 0 3px; gap: 4px; }
.ico { width: 13px; height: 11px; }
.faded { opacity: .55; }
.gear { width: 13px; height: 13px; }
.label { font-size: 8px; color: #555; margin-left: 5px; margin-right: 3px; white-space: nowrap; }
.label.l1 { margin-left: 5px; }
.root-name { display: flex; align-items: center; width: 64px; height: 12px; background: #7d7d7d; margin-right: 1px; }
.root-name b { color: #f2f2f2; font-size: 8px; margin-left: 8px; }
.cube { width: 12px; height: 12px; margin-left: 1px; }
.radio { width: 11px; height: 11px; }

.notice { position: absolute; left: 402px; top: 5px; width: 219px; height: 18px; display: flex; align-items: center; background: #f0f0f0; padding-left: 3px; font-size: 8px; color: #333; white-space: nowrap; }
.warn { width: 14px; height: 12px; margin-right: 2px; flex: none; }
.notice b { width: 45px; flex: none; }
.notice-text { width: 121px; font-size: 7.600px; color: #444; flex: none; }
.notice-save { padding-left: 9px; flex: 1; height: 18px; line-height: 17px; border-left: 1px solid #ddd; color: #1a7db8; }

.viewcube { position: absolute; left: 972px; top: 22px; width: 32px; height: 31px; background: #f0f0f0; border: 1px solid #b8b8b8; display: flex; align-items: center; justify-content: center; }
.vc-face { width: 19px; height: 18px; background: #e2e2e2; text-align: center; font: 15px/18px "Noto Sans CJK JP", sans-serif; color: #888; }
.vc-y, .vc-x, .vc-z { position: absolute; font: 6px "Open Sans", sans-serif; }
.vc-y { left: -3px; top: -5px; color: #70d070; }
.vc-x { right: -7px; top: -1px; color: #ee8888; }
.vc-z { left: -1px; bottom: -10px; color: #8a8af0; font-size: 8px; }

.palette { position: absolute; left: 834px; top: 73px; width: 187px; height: 311px; background: #f2f2f2; border: 1px solid #d4d4d4; display: flex; flex-direction: column; }
.pal-head { height: 18px; display: flex; align-items: center; border-bottom: 1px solid #dcdcdc; padding-left: 1px; flex: none; }
.pal-head .grip { margin: 0 4px 0 1px; }
.pal-head .minus { margin: 0 1px 0 0; }
.fwd { margin-left: auto; margin-right: 3px; width: 8px; height: 5px; }
.pal-body { flex: 1; position: relative; min-height: 0; padding: 1px 0 0 9px; }
.pal-scroll { position: absolute; right: 2px; top: 1px; width: 5px; height: 265px; background: #a8a8a8; border-radius: 2px; }
.pal-section { height: 16px; margin-bottom: 4px; display: flex; align-items: center; gap: 4px; font-weight: 700; font-size: 8px; color: #444; margin-left: 1px; }
.tri { font-size: 6px; }
.pal-row { height: 22.500px; display: flex; align-items: center; position: relative; font-size: 8px; color: #555; }
.pal-row span { white-space: nowrap; }
.pal-row .check, .pal-row .pal-ic { position: absolute; left: 100px; }
.pal-row .pal-ic { width: 13px; height: 12px; }
.pal-row .pal-ic.second { left: 121px; }
.check { width: 11px; height: 11px; border: 1px solid #666; border-radius: 2px; background: #bdbdbd; }
.check.on::after { content: ""; display: block; width: 4px; height: 8px; margin: -1px 0 0 3px; border: solid #222; border-width: 0 1.200px 1.200px 0; transform: rotate(35deg); }
.pal-foot { height: 29px; flex: none; border-top: 1px solid #d8d8d8; display: flex; align-items: center; justify-content: flex-end; padding-right: 9px; }
.pal-finish { width: 56px; height: 16px; border: 1px solid #c8c8c8; background: #f0f0f0; font: 8px "Noto Sans CJK JP", sans-serif; font-feature-settings: "palt"; color: #666; padding: 0; }

.navbar { position: absolute; left: 424px; top: 384px; width: 176px; height: 18px; display: flex; align-items: center; background: #f4f4f4; padding-left: 1px; }
.nv { width: 14px; height: 14px; }
.nv + .nv { margin-left: 5px; }
.nc + .nv { margin-left: 2.500px; }
.nc { width: 6px; height: 4px; color: #333; margin-left: 1px; }

/* Timeline */
.timeline { height: 38px; flex: none; background: #f0f0f0; border-top: 1px solid #e8e8e8; display: flex; align-items: center; }
.tl-controls { display: flex; gap: 8.500px; padding-left: 8px; width: 107px; flex: none; }
.tl-controls svg { width: 10px; height: 11px; }
.tl-track { position: relative; display: flex; gap: 0; height: 30px; align-items: flex-start; padding-top: 5px; }
.tl-item { width: 18px; height: 18px; }
.tl-bracket { position: absolute; left: 8px; top: 24px; width: 74px; height: 6px; }
.tl-marker { position: absolute; left: 84px; top: 2px; width: 10px; height: 25px; }
.tl-gear { width: 12px; height: 12px; margin-left: auto; margin-right: 10px; }

/* Taskbar */
.taskbar { height: 30px; flex: none; background: #1b2a33; display: flex; align-items: stretch; color: #e8e8e8; }
.start { width: 36px; flex: none; display: flex; align-items: center; justify-content: center; }
.start svg { width: 12px; height: 12px; }
.search { width: 258px; flex: none; background: #f2f2f2; border: 1px solid #c8c8c8; border-bottom: none; display: flex; align-items: center; position: relative; padding-left: 11px; font-size: 9.500px; color: #333; overflow: hidden; }
.s-ic { width: 12px; height: 12px; margin-right: 7px; }
.s-art { position: absolute; right: 0; bottom: 0; width: 60px; height: 30px; }
.tb-apps { display: flex; flex: none; }
.tb-app { width: 36.500px; display: flex; align-items: center; justify-content: center; flex: none; }
.tb-app svg { width: 19px; height: 18px; }
.tb-app.active { background: #4a565d; border-bottom: 2px solid #76b9ed; }
.tb-app.underlined { border-bottom: 2px solid #76b9ed; }
.tb-letter { font: 700 7px "Open Sans", sans-serif; fill: #fff; }
.weather { display: flex; align-items: center; margin-left: 8px; font-size: 9.500px; gap: 5px; width: 70px; flex: none; }
.weather svg { width: 20px; height: 18px; }
.tray { display: flex; align-items: center; gap: 4px; flex: none; }
.tray svg { width: 14px; height: 12px; }
.ime { font: 12px "Open Sans", sans-serif; margin-left: 2px; }
.clock { width: 52px; margin-left: 3px; display: flex; flex-direction: column; align-items: center; justify-content: center; font: 8.500px/13px "Open Sans", sans-serif; flex: none; }
.notify { position: relative; width: 22px; margin-left: 9px; flex: none; }
.notify svg { position: absolute; left: 1px; top: 9px; width: 13px; height: 13px; }
.badge { position: absolute; left: 5px; top: 13px; width: 13px; height: 13px; border-radius: 50%; background: #3a4750; border: 1px solid #ccc; font: 700 7px/11px "Open Sans", sans-serif; text-align: center; color: #fff; }
```
